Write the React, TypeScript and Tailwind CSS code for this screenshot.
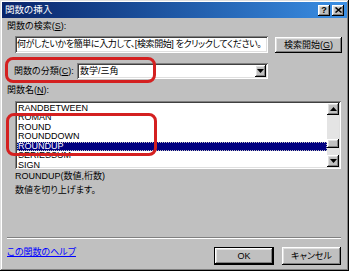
const raised =
  "shadow-[inset_-1px_-1px_#000,inset_1px_1px_#fff,inset_-2px_-2px_#808080,inset_2px_2px_#dfdfdf]";
const sunken =
  "shadow-[inset_1px_1px_#808080,inset_-1px_-1px_#fff,inset_2px_2px_#404040,inset_-2px_-2px_#dfdfdf]";

const items = ["RANDBETWEEN", "ROMAN", "ROUND", "ROUNDDOWN", "ROUNDUP", "SERIESSUM", "SIGN"];

function TitleButton({ children, className = "" }: { children: React.ReactNode; className?: string }) {
  return (
    <div className={`flex h-[11px] w-[12px] items-center justify-center bg-[#c0c0c0] ${raised} ${className}`}>
      {children}
    </div>
  );
}

function Arrow({ up }: { up?: boolean }) {
  return (
    <svg width="7" height="4" viewBox="0 0 7 4">
      <path d={up ? "M3.5 0L7 4H0Z" : "M0 0H7L3.5 4Z"} fill="#000" />
    </svg>
  );
}

export default function App() {
  return (
    <div
      className={`relative h-[271px] w-[349px] overflow-hidden bg-[#c0c0c0] p-[2px] text-[9px] leading-none text-black font-['Liberation_Sans','Noto_Sans_CJK_JP',sans-serif] [font-feature-settings:'palt'] shadow-[inset_-1px_-1px_#000,inset_1px_1px_#dfdfdf,inset_-2px_-2px_#808080,inset_2px_2px_#fff]`}
    >
      {/* title bar */}
      <div className="flex h-[16px] items-center bg-linear-to-r from-[#0a246a] to-[#3b8fe4] pl-[3px] pr-[3px]">
        <span className="flex-1 text-[9.5px] text-white">関数の挿入</span>
        <TitleButton>
          <span className="text-[9px] font-bold leading-none">?</span>
        </TitleButton>
        <TitleButton className="ml-[2px]">
          <svg width="7" height="6" viewBox="0 0 7 6">
            <path d="M0.5 0.5L6.5 5.5M6.5 0.5L0.5 5.5" stroke="#000" strokeWidth="1.5" />
          </svg>
        </TitleButton>
      </div>

      <div className="px-[5px]">
        {/* search */}
        <div className="mt-[2px] flex h-[12px] items-center">
          関数の検索(<span className="underline">S</span>):
        </div>
        <div className="mt-[4px] flex items-start">
          <div className={`ml-[8px] flex h-[17px] w-[253px] shrink-0 items-center overflow-hidden bg-white pl-[2px] ${sunken}`}>
            <span className="whitespace-nowrap tracking-[-0.4px]">
              何がしたいかを簡単に入力して、[検索開始] をクリックしてください。
            </span>
          </div>
          <button className={`ml-[7px] mt-[1px] flex h-[16px] w-[67px] shrink-0 items-center justify-center bg-[#c0c0c0] ${raised}`}>
            検索開始(<span className="underline">G</span>)
          </button>
        </div>

        {/* category */}
        <div className="mt-[10px] flex items-center">
          <span className="ml-[7px] w-[63px] shrink-0">
            関数の分類(<span className="underline">C</span>):
          </span>
          <div className={`flex h-[16px] w-[191px] shrink-0 items-center bg-white pl-[3px] pr-[2px] ${sunken}`}>
            <span className="flex-1">数学/三角</span>
            <div className={`flex h-[12px] w-[11px] items-center justify-center bg-[#c0c0c0] ${raised}`}>
              <Arrow />
            </div>
          </div>
        </div>

        {/* function list */}
        <div className="mt-[5px] flex h-[12px] items-center">
          関数名(<span className="underline">N</span>):
        </div>
        <div className={`ml-[8px] mt-[5px] flex h-[68px] w-[326px] bg-white p-[2px] ${sunken}`}>
          <div className="flex-1 pt-[0.5px]">
            {items.map((name) => (
              <div
                key={name}
                className={`flex h-[9.5px] items-center pl-[1px] ${
                  name === "ROUNDUP" ? "bg-[#000080] text-white outline outline-1 outline-dotted outline-[#c0c0c0] -outline-offset-1" : ""
                }`}
              >
                {name}
              </div>
            ))}
          </div>
          <div className="flex w-[12px] flex-col">
            <div className={`flex h-[12px] items-center justify-center bg-[#c0c0c0] ${raised}`}>
              <Arrow up />
            </div>
            <div className="flex-1 bg-[#e4e4e4] pt-[24px]">
              <div className={`h-[9px] bg-[#c0c0c0] ${raised}`} />
            </div>
            <div className={`flex h-[12px] items-center justify-center bg-[#c0c0c0] ${raised}`}>
              <Arrow />
            </div>
          </div>
        </div>

        {/* description */}
        <div className="ml-[8px] mt-[1px] flex h-[12px] items-center">ROUNDUP(数値,桁数)</div>
        <div className="ml-[8px] mt-[2px] flex h-[12px] items-center">数値を切り上げます。</div>

        <div className="mt-[41px] w-[334px] border-t border-b border-t-[#808080] border-b-white" />

        {/* footer */}
        <div className="mt-[8px] flex w-[334px] items-start">
          <a className="-mt-[1px] flex h-[12px] items-center text-[#0000ff] underline">この関数のヘルプ</a>
          <button className="ml-auto flex h-[18px] w-[60px] shrink-0 items-center justify-center border border-black bg-[#c0c0c0]">
            <span className={`flex h-full w-full items-center justify-center ${raised}`}>OK</span>
          </button>
          <button className={`ml-[8px] flex h-[18px] w-[59px] shrink-0 items-center justify-center bg-[#c0c0c0] ${raised}`}>
            キャンセル
          </button>
        </div>
      </div>

      {/* red annotation boxes */}
      <div className="pointer-events-none absolute left-[5px] top-[57px] h-[26px] w-[151px] rounded-[8px] border-[3px] border-[#d42020]" />
      <div className="pointer-events-none absolute left-[6px] top-[113px] h-[43px] w-[151px] rounded-[8px] border-[3px] border-[#d42020]" />
    </div>
  );
}
